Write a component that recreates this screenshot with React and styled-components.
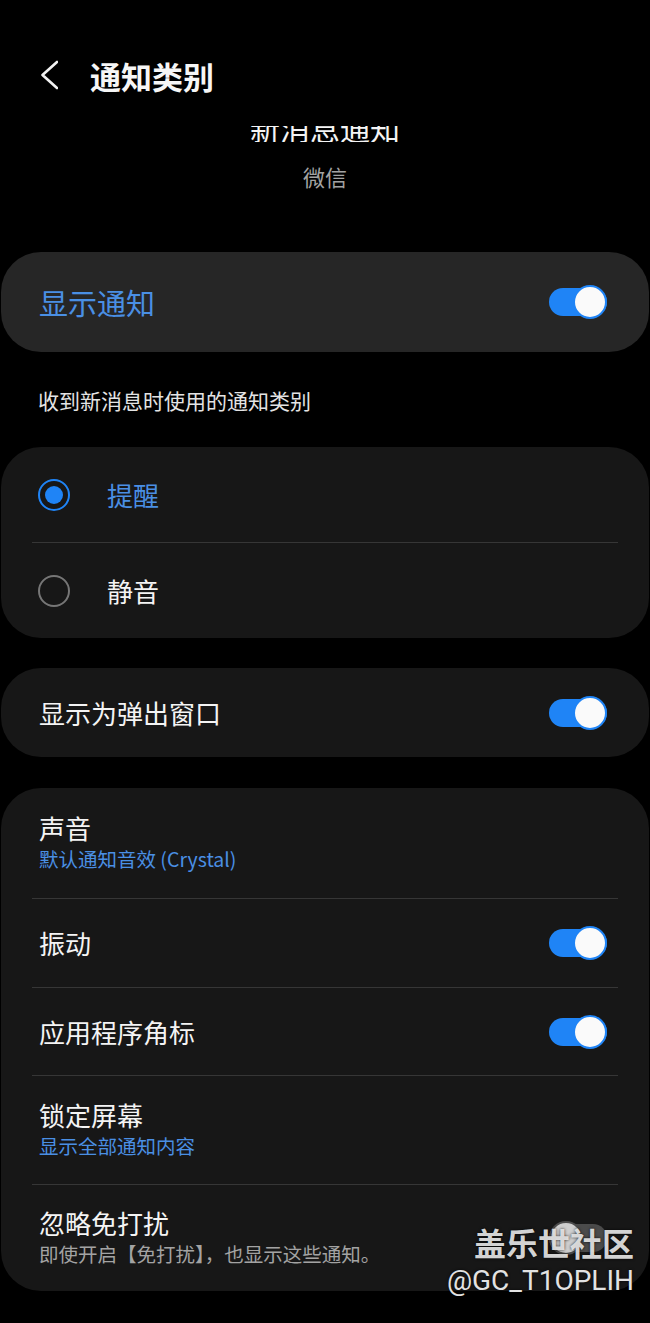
import React from 'react';
import styled, { createGlobalStyle } from 'styled-components';

const BLUE = '#1f84f6';
const TEXT_BLUE = '#4a8fe4';

function Toggle({ on }) {
  return (
    <Track $on={on}>
      <Thumb $on={on} />
    </Track>
  );
}

function Radio({ checked }) {
  return <RadioRing $checked={checked}>{checked && <RadioDot />}</RadioRing>;
}

function BackIcon() {
  return (
    <svg width="20" height="30" viewBox="0 0 20 30">
      <path d="M19 2 L4.5 15 L19 28" fill="none" stroke="#f2f2f2" strokeWidth="2.6" strokeLinecap="round" strokeLinejoin="round" />
    </svg>
  );
}

function SettingRow({ title, sub, subTone, toggle, height }) {
  return (
    <Row $h={height}>
      <RowText>
        <RowTitle>{title}</RowTitle>
        {sub && <RowSub $tone={subTone}>{sub}</RowSub>}
      </RowText>
      {toggle !== undefined && <Toggle on={toggle} />}
    </Row>
  );
}

export default function App() {
  return (
    <Page>
      <GlobalStyle />
      <Header>
        <BackIcon />
        <Title>通知类别</Title>
      </Header>

      {/* the list is scrolled a little, so the header hides the top of this line */}
      <SubtitleClip>
        <Subtitle>新消息通知</Subtitle>
      </SubtitleClip>
      <AppName>微信</AppName>

      <MasterCard>
        <MasterLabel>显示通知</MasterLabel>
        <Toggle on />
      </MasterCard>

      <SectionLabel>收到新消息时使用的通知类别</SectionLabel>

      <Card>
        <OptionRow>
          <Radio checked />
          <OptionText $active>提醒</OptionText>
        </OptionRow>
        <Divider />
        <OptionRow>
          <Radio />
          <OptionText>静音</OptionText>
        </OptionRow>
      </Card>

      <Card $gap={30}>
        <SettingRow title="显示为弹出窗口" toggle height={89} />
      </Card>

      <Card $gap={31}>
        <SettingRow title="声音" sub="默认通知音效 (Crystal)" subTone="blue" height={110} />
        <Divider />
        <SettingRow title="振动" toggle height={88} />
        <Divider />
        <SettingRow title="应用程序角标" toggle height={87} />
        <Divider />
        <SettingRow title="锁定屏幕" sub="显示全部通知内容" subTone="blue" height={108} />
        <Divider />
        <SettingRow title="忽略免打扰" sub="即使开启【免打扰】，也显示这些通知。" toggle={false} height={106} />
      </Card>

      <Watermark>
        <WatermarkBrand>盖乐世社区</WatermarkBrand>
        <WatermarkUser>@GC_T1OPLIH</WatermarkUser>
      </Watermark>
    </Page>
  );
}

const GlobalStyle = createGlobalStyle`
  html, body {
    margin: 0;
    padding: 0;
    background: #000;
  }
  body {
    font-family: "Noto Sans CJK SC", "Noto Sans", sans-serif;
    color: #f4f4f4;
  }
`;

const Page = styled.div`
  position: relative;
  width: 650px;
  min-height: 1323px;
  display: flex;
  flex-direction: column;
  background: #000;
`;

const Header = styled.header`
  display: flex;
  align-items: center;
  gap: 32px;
  height: 50px;
  margin-top: 50px;
  padding-left: 38px;
`;

const Title = styled.h1`
  margin: 0;
  font-size: 31px;
  font-weight: 700;
  line-height: 1;
  color: #f6f6f6;
`;

const SubtitleClip = styled.div`
  height: 16px;
  margin-top: 26px;
  overflow: hidden;
  display: flex;
  justify-content: center;
  align-items: flex-end;
`;

const Subtitle = styled.div`
  font-size: 30px;
  line-height: 30px;
  color: #f4f4f4;
  flex-shrink: 0;
`;

const AppName = styled.div`
  margin-top: 23px;
  text-align: center;
  font-size: 22px;
  line-height: 22px;
  color: #a3a3a3;
`;

const MasterCard = styled.div`
  height: 100px;
  margin: 65px 1px 0;
  padding: 0 42px 0 38px;
  border-radius: 40px;
  background: #262626;
  display: flex;
  align-items: center;
  justify-content: space-between;
`;

const MasterLabel = styled.div`
  font-size: 29px;
  color: ${TEXT_BLUE};
`;

const SectionLabel = styled.div`
  height: 95px;
  padding-left: 38px;
  display: flex;
  align-items: center;
  font-size: 21px;
  color: #e4e4e4;
`;

const Card = styled.div`
  margin: ${({ $gap }) => $gap || 0}px 1px 0;
  border-radius: 40px;
  background: #171717;
  display: flex;
  flex-direction: column;
`;

const Divider = styled.div`
  height: 1px;
  margin: 0 31px;
  background: #363636;
`;

const OptionRow = styled.div`
  height: 95px;
  padding-left: 37px;
  display: flex;
  align-items: center;
  gap: 37px;
`;

const RadioRing = styled.div`
  width: 32px;
  height: 32px;
  box-sizing: border-box;
  border-radius: 50%;
  border: 2px solid ${({ $checked }) => ($checked ? BLUE : '#767676')};
  display: flex;
  align-items: center;
  justify-content: center;
`;

const RadioDot = styled.div`
  width: 18px;
  height: 18px;
  border-radius: 50%;
  background: ${BLUE};
`;

const OptionText = styled.div`
  font-size: 26px;
  color: ${({ $active }) => ($active ? TEXT_BLUE : '#f4f4f4')};
`;

const Row = styled.div`
  height: ${({ $h }) => $h}px;
  padding: 0 42px 0 38px;
  display: flex;
  align-items: center;
  justify-content: space-between;
`;

const RowText = styled.div`
  display: flex;
  flex-direction: column;
`;

const RowTitle = styled.div`
  font-size: 26px;
  line-height: 32px;
  color: #f4f4f4;
`;

const RowSub = styled.div`
  font-size: 19.5px;
  line-height: 30px;
  color: ${({ $tone }) => ($tone === 'blue' ? TEXT_BLUE : '#a3a3a3')};
`;

const Track = styled.div`
  width: 58px;
  height: 28px;
  flex-shrink: 0;
  border-radius: 14px;
  background: ${({ $on }) => ($on ? BLUE : '#4b4b4b')};
  display: flex;
  align-items: center;
  justify-content: ${({ $on }) => ($on ? 'flex-end' : 'flex-start')};
`;

const Thumb = styled.div`
  width: 34px;
  height: 34px;
  flex-shrink: 0;
  box-sizing: border-box;
  border-radius: 50%;
  background: ${({ $on }) => ($on ? '#fafafa' : '#cfcfcf')};
  border: 2px solid ${({ $on }) => ($on ? BLUE : '#4b4b4b')};
`;

const Watermark = styled.div`
  position: absolute;
  right: 16px;
  top: 1221px;
  display: flex;
  flex-direction: column;
  align-items: flex-end;
  color: #e2e2e2;
  text-shadow: 0 0 3px rgba(0, 0, 0, 0.8);
`;

const WatermarkBrand = styled.div`
  font-size: 32px;
  font-weight: 700;
  line-height: 42px;
  color: rgba(232, 232, 232, 0.92);
`;

const WatermarkUser = styled.div`
  font-family: Roboto, "Noto Sans", sans-serif;
  font-size: 28px;
  line-height: 36px;
`;
